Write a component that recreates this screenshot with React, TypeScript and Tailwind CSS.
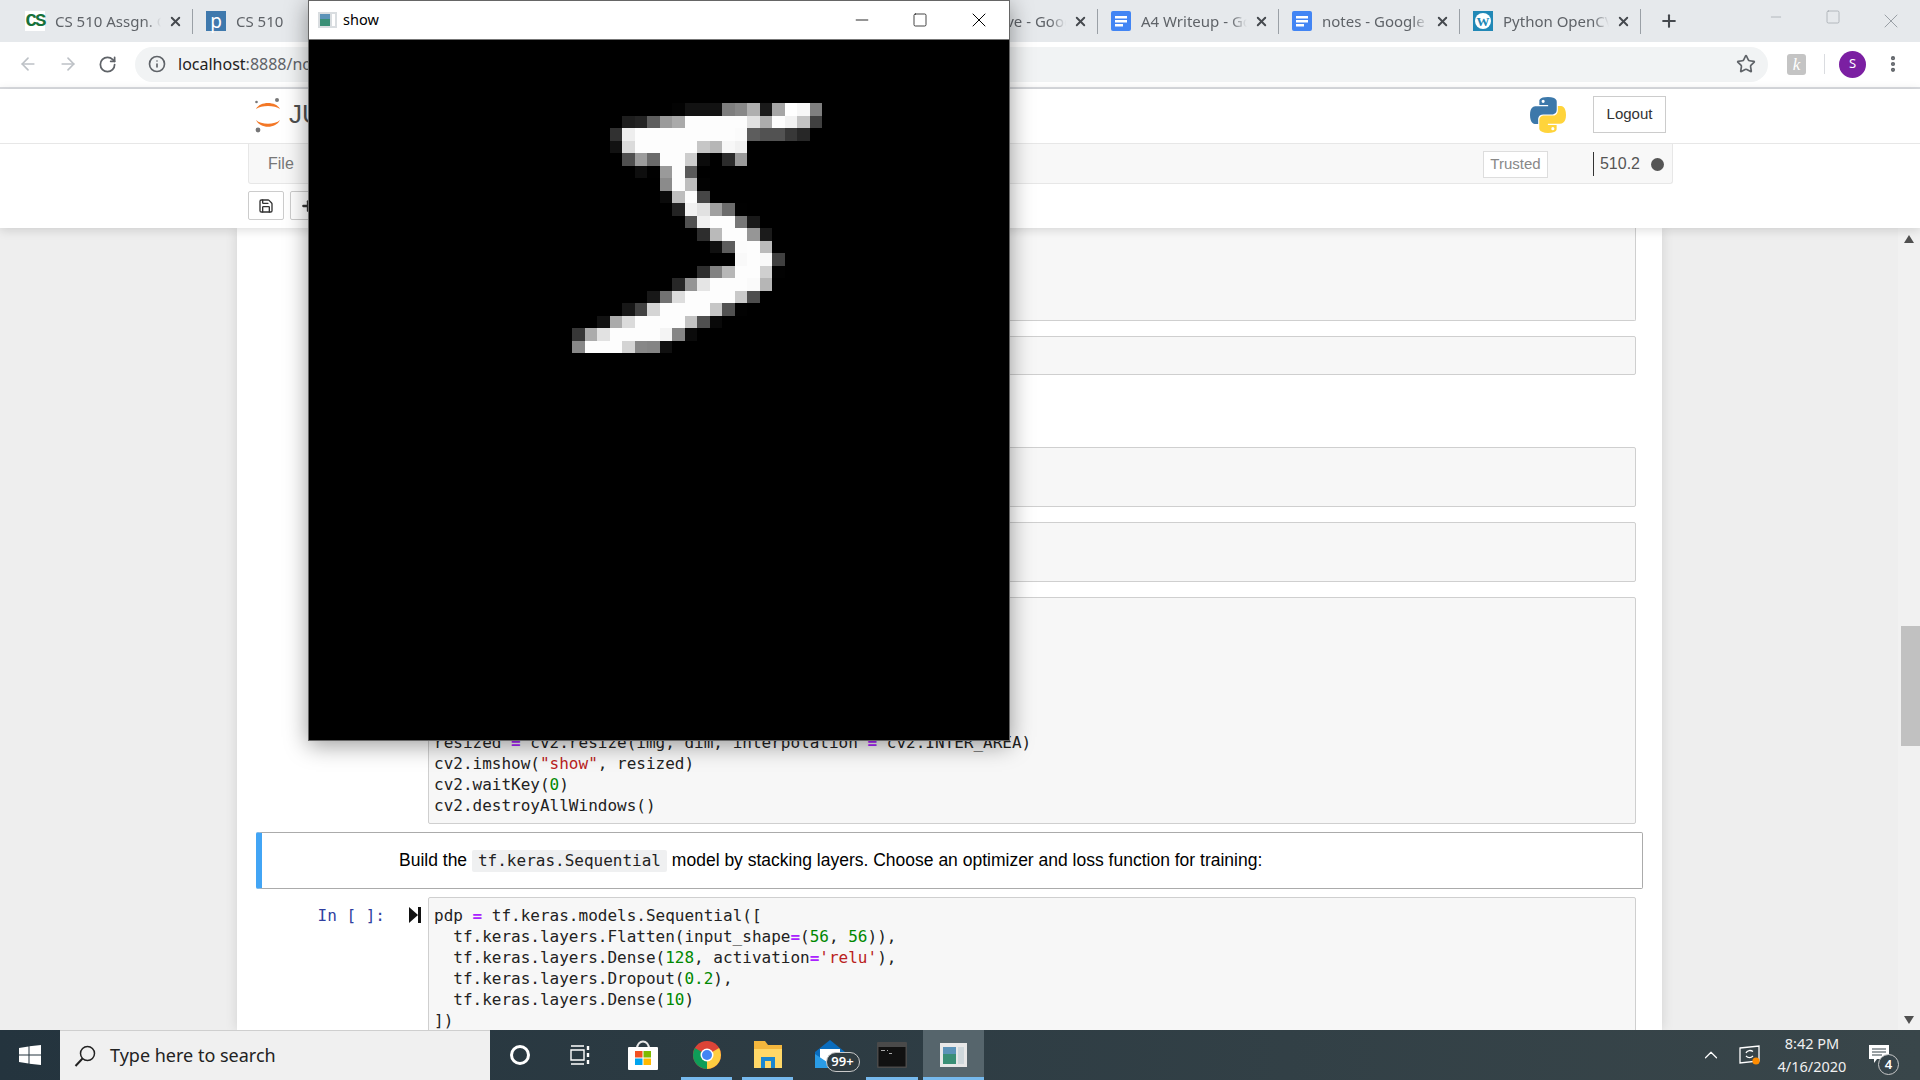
import React from "react";
import { ArrowLeft, ArrowRight, ChevronUp, EllipsisVertical, Info, Minus, Plus, RotateCw, Save, Search, Square, Star, X } from "lucide-react";

// first MNIST digit, rows 5-24 starting at column 4
const digit = [
  [0, 0, 0, 0, 0, 0, 0, 0, 3, 18, 18, 18, 126, 136, 175, 26, 166, 255, 247, 127],
  [0, 0, 0, 0, 30, 36, 94, 154, 170, 253, 253, 253, 253, 253, 225, 172, 253, 242, 195, 64],
  [0, 0, 0, 49, 238, 253, 253, 253, 253, 253, 253, 253, 253, 251, 93, 82, 82, 56, 39, 0],
  [0, 0, 0, 18, 219, 253, 253, 253, 253, 253, 198, 182, 247, 241, 0, 0, 0, 0, 0, 0],
  [0, 0, 0, 0, 80, 156, 107, 253, 253, 205, 11, 0, 43, 154, 0, 0, 0, 0, 0, 0],
  [0, 0, 0, 0, 0, 14, 1, 154, 253, 90, 0, 0, 0, 0, 0, 0, 0, 0, 0, 0],
  [0, 0, 0, 0, 0, 0, 0, 139, 253, 190, 2, 0, 0, 0, 0, 0, 0, 0, 0, 0],
  [0, 0, 0, 0, 0, 0, 0, 11, 190, 253, 70, 0, 0, 0, 0, 0, 0, 0, 0, 0],
  [0, 0, 0, 0, 0, 0, 0, 0, 35, 241, 225, 160, 108, 1, 0, 0, 0, 0, 0, 0],
  [0, 0, 0, 0, 0, 0, 0, 0, 0, 81, 240, 253, 253, 119, 25, 0, 0, 0, 0, 0],
  [0, 0, 0, 0, 0, 0, 0, 0, 0, 0, 45, 186, 253, 253, 150, 27, 0, 0, 0, 0],
  [0, 0, 0, 0, 0, 0, 0, 0, 0, 0, 0, 16, 93, 252, 253, 187, 0, 0, 0, 0],
  [0, 0, 0, 0, 0, 0, 0, 0, 0, 0, 0, 0, 0, 249, 253, 249, 64, 0, 0, 0],
  [0, 0, 0, 0, 0, 0, 0, 0, 0, 0, 46, 130, 183, 253, 253, 207, 2, 0, 0, 0],
  [0, 0, 0, 0, 0, 0, 0, 0, 39, 148, 229, 253, 253, 253, 250, 182, 0, 0, 0, 0],
  [0, 0, 0, 0, 0, 0, 24, 114, 221, 253, 253, 253, 253, 201, 78, 0, 0, 0, 0, 0],
  [0, 0, 0, 0, 23, 66, 213, 253, 253, 253, 253, 198, 81, 2, 0, 0, 0, 0, 0, 0],
  [0, 0, 18, 171, 219, 253, 253, 253, 253, 195, 80, 9, 0, 0, 0, 0, 0, 0, 0, 0],
  [55, 172, 226, 253, 253, 253, 253, 244, 133, 11, 0, 0, 0, 0, 0, 0, 0, 0, 0, 0],
  [136, 253, 253, 253, 212, 135, 132, 16, 0, 0, 0, 0, 0, 0, 0, 0, 0, 0, 0, 0],
];

const DocsIcon = () => (
  <svg width="20" height="20" viewBox="0 0 20 20">
    <rect width="20" height="20" rx="2" fill="#4285f4" />
    <path d="M4 5h12v2.4H4zM4 9h12v2.4H4zM4 13h8v2.4H4z" fill="#fff" />
  </svg>
);

const tabs = [
  {
    title: "CS 510 Assgn. Grading",
    icon: <span className="flex h-5 w-5 items-center justify-center bg-white font-['Liberation_Mono'] text-[19px] font-bold tracking-[-2px] text-[#17713a]">CS</span>,
  },
  {
    title: "CS 510",
    icon: <span className="flex h-5 w-5 items-center justify-center bg-[#3f79ad] font-['Noto_Sans'] text-[19px] leading-none text-white">p</span>,
    noClose: true,
  },
  { title: "Untitled", icon: <DocsIcon /> },
  { title: "Untitled", icon: <DocsIcon /> },
  { title: "Lecture notes", icon: <DocsIcon /> },
  { title: "My Drive - Google Drive", icon: <DocsIcon /> },
  { title: "A4 Writeup - Google Docs", icon: <DocsIcon /> },
  { title: "notes - Google Docs", icon: <DocsIcon /> },
  {
    title: "Python OpenCV",
    icon: (
      <span className="flex h-5 w-5 items-center justify-center bg-[#2188b6]">
        <span className="flex h-4 w-4 items-center justify-center rounded-full bg-white font-['Liberation_Serif'] text-[13px] font-bold leading-none text-[#2188b6]">W</span>
      </span>
    ),
  },
];

const Tab = ({ title, icon, noClose }: { title: string; icon: React.ReactNode; noClose?: boolean }) => (
  <div className="flex h-[25px] w-[181px] shrink-0 items-center border-r border-[#9aa0a6] pl-[13px]">
    {icon}
    <span className="ml-[10px] w-[106px] overflow-hidden whitespace-nowrap text-[15px] text-[#5f6368] [mask-image:linear-gradient(to_right,black_85%,transparent)]">
      {title}
    </span>
    {!noClose && <X className="ml-[7px] h-[15px] w-[15px] text-[#45494e]" strokeWidth={3} />}
  </div>
);

const Op = ({ children }: { children: React.ReactNode }) => <span className="font-bold text-[#aa22ff]">{children}</span>;
const Num = ({ children }: { children: React.ReactNode }) => <span className="text-[#008800]">{children}</span>;
const Str = ({ children }: { children: React.ReactNode }) => <span className="text-[#ba2121]">{children}</span>;

const CodeCell = ({ className, children }: { className: string; children?: React.ReactNode }) => (
  <div className={`ml-[172px] w-[1208px] rounded-[2px] border border-[#cfcfcf] bg-[#f7f7f7] ${className}`}>{children}</div>
);

const Slot = ({ width, active, open, children }: { width: string; active?: boolean; open?: boolean; children: React.ReactNode }) => (
  <div className={`relative flex h-full items-center justify-center ${width} ${active ? "bg-[#56656c]" : ""}`}>
    {children}
    {open && <span className="absolute bottom-0 left-[5px] right-[5px] h-[3px] bg-[#76b9ed]" />}
    {active && <span className="absolute bottom-0 left-0 right-0 h-[3px] bg-[#76b9ed]" />}
  </div>
);

export default function App() {
  return (
    <div className="relative flex h-screen w-[1920px] flex-col overflow-hidden bg-[#eeeeee] font-['Liberation_Sans',Arial,sans-serif]">
      {/* Chrome tabs */}
      <div className="flex h-[42px] shrink-0 items-center bg-[#e6e9ec] pl-[12px] font-['Noto_Sans',sans-serif]">
        {tabs.map((tab, i) => (
          <Tab key={i} {...tab} />
        ))}
        <Plus className="ml-[18px] h-[20px] w-[20px] text-[#45494e]" strokeWidth={2.5} />
        <div className="ml-auto flex">
          <div className="flex w-[56px] justify-center">
            <Minus className="h-[16px] w-[16px] text-[#9aa0a6]" strokeWidth={1} />
          </div>
          <div className="flex w-[58px] justify-center">
            <Square className="h-[16px] w-[16px] text-[#9aa0a6]" strokeWidth={1} />
          </div>
          <div className="flex w-[58px] justify-center">
            <X className="h-[24px] w-[24px] text-[#9aa0a6]" strokeWidth={1} />
          </div>
        </div>
      </div>

      {/* Address bar */}
      <div className="flex h-[47px] shrink-0 items-center border-b-2 border-[#dadce0] bg-white pb-[1px] pl-[18px]">
        <ArrowLeft className="h-[20px] w-[20px] text-[#bdc1c6]" strokeWidth={2} />
        <ArrowRight className="ml-[20px] h-[20px] w-[20px] text-[#bdc1c6]" strokeWidth={2} />
        <RotateCw className="ml-[20px] h-[19px] w-[19px] text-[#5f6368]" strokeWidth={2.2} />
        <div className="ml-[18px] flex h-[35px] w-[1633px] items-center rounded-full bg-[#f1f3f4] pl-[13px] pr-[12px]">
          <Info className="h-[18px] w-[18px] text-[#5f6368]" strokeWidth={2.2} />
          <span className="ml-[12px] font-['Noto_Sans',sans-serif] text-[16px] text-[#222]">
            localhost<span className="text-[#5f6368]">:8888/notebooks/CS510/A4.ipynb</span>
          </span>
          <Star className="ml-auto h-[20px] w-[20px] text-[#5f6368]" strokeWidth={2} />
        </div>
        <span className="ml-[19px] flex h-[21px] w-[19px] items-center justify-center rounded-[3px] bg-[#c4c4c4] font-['Liberation_Serif'] text-[17px] italic leading-none text-white">k</span>
        <span className="ml-[18px] h-[20px] w-px bg-[#dadce0]" />
        <span className="ml-[14px] flex h-[27px] w-[27px] items-center justify-center rounded-full bg-[#7b1fa2] font-['Noto_Sans',sans-serif] text-[13px] text-white">S</span>
        <EllipsisVertical className="ml-[17px] h-[20px] w-[20px] text-[#5f6368]" strokeWidth={3} />
      </div>

      {/* Jupyter header */}
      <div className="relative z-10 shrink-0 bg-white shadow-[0_2px_10px_rgba(0,0,0,0.14)]">
        <div className="flex h-[55px] items-center border-b border-[#e7e7e7] pb-[3px] pl-[254px] pr-[254px]">
          <svg width="28" height="36" viewBox="0 0 28 36">
            <path d="M2 12C6 4 22 4 26 12C21 8 7 8 2 12Z" fill="#f37726" />
            <path d="M2 23C6 32 22 32 26 23C21 28 7 28 2 23Z" fill="#f37726" />
            <circle cx="23" cy="3" r="2" fill="#767677" />
            <circle cx="2.5" cy="5" r="1.3" fill="#767677" />
            <circle cx="4" cy="33" r="2.4" fill="#767677" />
          </svg>
          <span className="ml-[7px] text-[26px] text-[#4e4e4e]">JUPYTER</span>
          <svg className="ml-auto" width="36" height="36" viewBox="0 0 110 110">
            <path fillRule="evenodd" fill="#3c78aa" d="M54.9 0C26.8 0 28.6 12.2 28.6 12.2l0 12.6h26.8v3.8H17.9S0 26.6 0 54.9s15.6 27.3 15.6 27.3h9.3V69s-.5-15.6 15.4-15.6h26.5s14.9.2 14.9-14.4V14.9S84 0 54.9 0zM40.2 8.5a4.8 4.8 0 1 1 0 9.6 4.8 4.8 0 0 1 0-9.6z" />
            <path fillRule="evenodd" fill="#ffd43b" transform="rotate(180 55 55)" d="M54.9 0C26.8 0 28.6 12.2 28.6 12.2l0 12.6h26.8v3.8H17.9S0 26.6 0 54.9s15.6 27.3 15.6 27.3h9.3V69s-.5-15.6 15.4-15.6h26.5s14.9.2 14.9-14.4V14.9S84 0 54.9 0zM40.2 8.5a4.8 4.8 0 1 1 0 9.6 4.8 4.8 0 0 1 0-9.6z" />
          </svg>
          <button className="ml-[27px] h-[37px] w-[73px] border border-[#cccccc] text-[15px] text-[#333]">Logout</button>
        </div>

        <div className="ml-[248px] flex h-[40px] w-[1425px] items-center rounded-b-[3px] border-x border-b border-[#e7e7e7] bg-[#f8f8f8] pl-[19px] pt-[1px]">
          <span className="text-[16px] text-[#777]">File</span>
          <span className="ml-auto flex h-[27px] w-[65px] items-center justify-center border border-[#dddddd] bg-white text-[15px] text-[#888]">Trusted</span>
          <span className="ml-[45px] h-[24px] w-px bg-[#333]" />
          <span className="ml-[6px] text-[16px] text-[#555]">510.2</span>
          <span className="ml-[11px] mr-[8px] h-[13px] w-[13px] rounded-full bg-[#555]" />
        </div>

        <div className="flex h-[44px] items-start gap-[6px] pl-[248px] pt-[7px]">
          <button className="flex h-[29px] w-[36px] items-center justify-center rounded-[2px] border border-[#cccccc]">
            <Save className="h-[16px] w-[16px] text-[#333]" strokeWidth={2} />
          </button>
          <button className="flex h-[29px] w-[36px] items-center justify-center rounded-[2px] border border-[#cccccc]">
            <Plus className="h-[16px] w-[16px] text-[#333]" strokeWidth={3.5} />
          </button>
        </div>
      </div>

      {/* Notebook */}
      <div className="flex min-h-0 flex-1 pl-[237px]">
        <div className="w-[1425px] overflow-hidden bg-white pl-[19px] font-['DejaVu_Sans_Mono',monospace] text-[16px] leading-[21px] text-[#222] shadow-[0_0_12px_rgba(0,0,0,0.12)]">
          <CodeCell className="h-[93px] rounded-t-none border-t-0" />
          <CodeCell className="mt-[15px] h-[39px]" />
          <CodeCell className="mt-[72px] h-[60px]" />
          <CodeCell className="mt-[15px] h-[60px]" />
          <CodeCell className="mt-[15px] flex h-[227px] flex-col justify-end pb-[7px] pl-[5px]">
            <div className="whitespace-pre">
              resized <Op>=</Op> cv2.resize(img, dim, interpolation <Op>=</Op> cv2.INTER_AREA)
            </div>
            <div className="whitespace-pre">
              cv2.imshow(<Str>"show"</Str>, resized)
            </div>
            <div className="whitespace-pre">
              cv2.waitKey(<Num>0</Num>)
            </div>
            <div className="whitespace-pre">cv2.destroyAllWindows()</div>
          </CodeCell>

          <div className="mt-[8px] flex h-[57px] w-[1387px] items-center rounded-[2px] border border-[#ababab] border-l-[6px] border-l-[#42a5f5] pl-[137px] font-['Liberation_Sans',Arial,sans-serif] text-[17.5px] text-black">
            <span className="whitespace-pre">Build the </span>
            <span className="rounded-[2px] bg-[#eff0f1] px-[6px] font-['DejaVu_Sans_Mono',monospace] text-[16px] leading-[22px] text-[#222]">tf.keras.Sequential</span>
            <span className="whitespace-pre"> model by stacking layers. Choose an optimizer and loss function for training:</span>
          </div>

          <div className="relative mt-[8px] flex">
            <div className="flex w-[172px] justify-end pr-[7px] pt-[8px]">
              <span className="mr-[-1px] whitespace-pre text-[#303f9f]">In [ ]:</span>
              <svg className="ml-[25px] mt-[2px]" width="12" height="16" viewBox="0 0 12 16">
                <path d="M0 0L9 8L0 16Z M9 0h3v16h-3z" fill="#111" />
              </svg>
            </div>
            <div className="h-[160px] w-[1208px] rounded-[2px] border border-[#cfcfcf] bg-[#f7f7f7] pl-[5px] pt-[7px]">
              <div className="whitespace-pre">
                pdp <Op>=</Op> tf.keras.models.Sequential([
              </div>
              <div className="whitespace-pre">
                {"  "}tf.keras.layers.Flatten(input_shape<Op>=</Op>(<Num>56</Num>, <Num>56</Num>)),
              </div>
              <div className="whitespace-pre">
                {"  "}tf.keras.layers.Dense(<Num>128</Num>, activation<Op>=</Op>
                <Str>'relu'</Str>),
              </div>
              <div className="whitespace-pre">
                {"  "}tf.keras.layers.Dropout(<Num>0.2</Num>),
              </div>
              <div className="whitespace-pre">
                {"  "}tf.keras.layers.Dense(<Num>10</Num>)
              </div>
              <div className="whitespace-pre">])</div>
            </div>
          </div>
        </div>

        {/* Scrollbar */}
        <div className="ml-auto flex w-[22px] flex-col items-end bg-[#f1f1f1]">
          <svg className="mr-[6px] mt-[7px]" width="10" height="8" viewBox="0 0 10 8">
            <path d="M5 0L10 8H0Z" fill="#505050" />
          </svg>
          <div className="mt-[383px] h-[120px] w-[19px] bg-[#c1c1c1]" />
          <svg className="mb-[6px] mr-[6px] mt-auto" width="10" height="8" viewBox="0 0 10 8">
            <path d="M0 0H10L5 8Z" fill="#505050" />
          </svg>
        </div>
      </div>

      {/* Taskbar */}
      <div className="relative z-30 flex h-[50px] shrink-0 items-center bg-gradient-to-r from-[#24343e] to-[#39464a] font-['Noto_Sans',sans-serif]">
        <div className="flex h-full w-[60px] items-center justify-center">
          <svg width="22" height="20" viewBox="0 0 22 20">
            <path d="M0 3L9.5 1.5V9.5H0ZM10.5 1.3L22 0V9.5H10.5ZM0 10.5H9.5V18.5L0 17ZM10.5 10.5H22V20L10.5 18.7Z" fill="#fff" />
          </svg>
        </div>
        <div className="flex h-full w-[430px] items-center border-t border-[#cfcfcf] bg-[#f0f0f0] pl-[13px]">
          <svg className="h-[24px] w-[24px]" viewBox="0 0 24 24" fill="none" stroke="#222" strokeWidth="1.5">
            <circle cx="14.5" cy="9.5" r="7" />
            <path d="M9.5 14.5L2.5 22" strokeWidth="2" />
          </svg>
          <span className="ml-[13px] text-[18px] text-[#222]">Type here to search</span>
        </div>
        <Slot width="w-[60px]">
          <span className="h-[20px] w-[20px] rounded-full border-[3px] border-white" />
        </Slot>
        <Slot width="w-[60px]">
          <svg width="20" height="20" viewBox="0 0 20 20" fill="none" stroke="#fff" strokeWidth="1.4">
            <path d="M1 1H14M1 19H14M1 5H14V15H1Z" />
            <path d="M18 1V5M18 8V12M18 15V19" strokeWidth="2.4" />
          </svg>
        </Slot>
        <Slot width="w-[66px]">
          <svg width="30" height="30" viewBox="0 0 30 30">
            <path d="M9 9C9 -1 21 -1 21 9" fill="none" stroke="#e8e8e8" strokeWidth="2" />
            <rect y="7" width="30" height="23" rx="1" fill="#fff" />
            <rect x="7" y="11" width="7.5" height="6.5" fill="#f25022" />
            <rect x="15.5" y="11" width="7.5" height="6.5" fill="#7fba00" />
            <rect x="7" y="18.5" width="7.5" height="6.5" fill="#00a4ef" />
            <rect x="15.5" y="18.5" width="7.5" height="6.5" fill="#ffb900" />
          </svg>
        </Slot>
        <Slot width="w-[61px]" open>
          <svg width="30" height="30" viewBox="0 0 30 30">
            <circle cx="15" cy="15" r="14" fill="#db4437" />
            <path d="M15 15L27.1 8A14 14 0 0 1 15 29Z" fill="#ffcd40" />
            <path d="M15 15L15 29A14 14 0 0 1 2.9 8Z" fill="#0f9d58" />
            <circle cx="15" cy="15" r="6.5" fill="#fff" />
            <circle cx="15" cy="15" r="5" fill="#4285f4" />
          </svg>
        </Slot>
        <Slot width="w-[61px]" open>
          <svg width="30" height="30" viewBox="0 0 30 30">
            <path d="M1 1H12L15 5H29V28H1Z" fill="#f4b73d" />
            <path d="M1 9H29V28H1Z" fill="#ffd868" />
            <path d="M8 28V17H22V28H18V21H12V28Z" fill="#1a86d0" />
          </svg>
        </Slot>
        <Slot width="w-[63px]">
          <div className="relative">
            <svg width="30" height="30" viewBox="0 0 30 30">
              <path d="M15 0L30 12V28H0V12Z" fill="#0a6cbd" />
              <path d="M5 9H25V20L15 24L5 20Z" fill="#fff" />
              <path d="M0 14L15 24L30 14V28H0Z" fill="#2a9ce6" />
            </svg>
            <span className="absolute left-[11px] top-[12px] flex h-[20px] w-[34px] items-center justify-center rounded-full border border-[#c9c9c9] bg-[#2f3b40] text-[13px] font-semibold text-white">99+</span>
          </div>
        </Slot>
        <Slot width="w-[62px]" open>
          <svg width="30" height="26" viewBox="0 0 30 26">
            <rect width="30" height="26" rx="1" fill="#4a4a4a" />
            <rect x="1.5" y="5" width="27" height="19.5" fill="#111" />
            <path d="M4 8H8V9H4ZM10 8H11V9H10ZM12 11H15V12H12Z" fill="#aaa" />
          </svg>
        </Slot>
        <Slot width="w-[61px]" active>
          <svg width="27" height="24" viewBox="0 0 27 24">
            <rect width="27" height="24" fill="#e8e8e8" />
            <rect x="3" y="4" width="13" height="17" fill="#3a8f76" />
            <rect x="3" y="4" width="13" height="7" fill="#5b93b8" />
            <rect x="18" y="4" width="6" height="17" fill="#cfd8dc" />
          </svg>
        </Slot>

        <div className="ml-auto flex items-center pr-[31px]">
          <ChevronUp className="h-[22px] w-[24px] text-white" strokeWidth={1.3} />
          <svg className="ml-[16px]" width="21" height="20" viewBox="0 0 21 20" fill="none" stroke="#fff" strokeWidth="1.3">
            <path d="M1 3L20 1V16L1 18Z" />
            <path d="M7 8C8 5 12 5 14 6.5M14 11C12 13 9 13 7 11" />
            <circle cx="17" cy="16" r="3.6" fill="#ff8c00" stroke="none" />
          </svg>
          <div className="ml-[1px] flex w-[102px] flex-col items-center text-[14.5px] leading-[23px] text-[#f0f0f0]">
            <span>8:42 PM</span>
            <span>4/16/2020</span>
          </div>
          <div className="relative ml-[6px] h-[20px] w-[20px]">
            <svg width="20" height="18" viewBox="0 0 20 18">
              <path d="M0 0H20V14H8L5 18V14H0Z" fill="#fff" />
              <path d="M3 4H17M3 7H17M3 10H13" stroke="#36444a" strokeWidth="1.2" />
            </svg>
            <span className="absolute left-[9px] top-[9px] flex h-[21px] w-[21px] items-center justify-center rounded-full border border-[#c9c9c9] bg-[#36444a] text-[13px] font-semibold text-white">4</span>
          </div>
        </div>
      </div>

      {/* cv2 "show" window */}
      <div className="absolute left-[308px] top-0 z-20 w-[702px] border border-[#666666] bg-white shadow-[0_4px_22px_rgba(0,0,0,0.4)]">
        <div className="flex h-[39px] items-center border-b border-[#777777] pl-[9px] font-['Noto_Sans',sans-serif]">
          <svg width="19" height="16" viewBox="0 0 19 16">
            <rect width="19" height="16" fill="#d9dde0" />
            <rect x="2" y="2" width="10" height="12" fill="#3a8f76" />
            <rect x="2" y="2" width="10" height="5" fill="#5b93b8" />
            <rect x="14" y="2" width="3" height="12" fill="#fff" />
          </svg>
          <span className="ml-[6px] text-[14.5px] text-black">show</span>
          <div className="ml-auto flex items-center">
            <Minus className="mr-[40px] h-[20px] w-[20px] text-black" strokeWidth={1} />
            <Square className="mr-[39px] h-[16px] w-[16px] text-black" strokeWidth={1.1} />
            <X className="mr-[18px] h-[24px] w-[24px] text-black" strokeWidth={1} />
          </div>
        </div>
        <div className="h-[700px] w-[700px] bg-black pl-[262.67px] pt-[62.67px]">
          <svg className="blur-[0.5px]" width="250" height="250" viewBox="0 0 20 20" shapeRendering="crispEdges">
            {digit.map((row, y) =>
              row.map((v, x) => (v > 0 ? <rect key={`${x}-${y}`} x={x} y={y} width="1" height="1" fill={`rgb(${v},${v},${v})`} /> : null)),
            )}
          </svg>
        </div>
      </div>
    </div>
  );
}
